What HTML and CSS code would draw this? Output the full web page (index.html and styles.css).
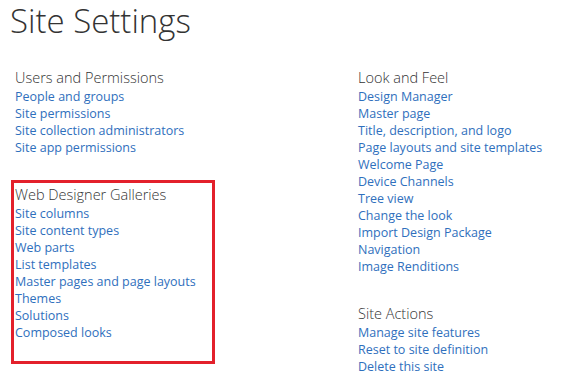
FILE: index.html
```html
<!DOCTYPE html>
<html lang="en">
<head>
  <meta charset="UTF-8">
  <title>Site Settings</title>
  <link rel="stylesheet" href="styles.css">
</head>
<body>
  <div class="page">
    <h1 class="page-title">Site Settings</h1>

    <div class="settings">
      <!-- left column -->
      <div class="column">
        <div class="link-section">
          <h2>Users and Permissions</h2>
          <ul>
            <li><a href="#">People and groups</a></li>
            <li><a href="#">Site permissions</a></li>
            <li><a href="#">Site collection administrators</a></li>
            <li><a href="#">Site app permissions</a></li>
          </ul>
        </div>

        <div class="link-section highlight">
          <h2>Web Designer Galleries</h2>
          <ul>
            <li><a href="#">Site columns</a></li>
            <li><a href="#">Site content types</a></li>
            <li><a href="#">Web parts</a></li>
            <li><a href="#">List templates</a></li>
            <li><a href="#">Master pages and page layouts</a></li>
            <li><a href="#">Themes</a></li>
            <li><a href="#">Solutions</a></li>
            <li><a href="#">Composed looks</a></li>
          </ul>
        </div>
      </div>

      <!-- right column -->
      <div class="column">
        <div class="link-section">
          <h2>Look and Feel</h2>
          <ul>
            <li><a href="#">Design Manager</a></li>
            <li><a href="#">Master page</a></li>
            <li><a href="#">Title, description, and logo</a></li>
            <li><a href="#">Page layouts and site templates</a></li>
            <li><a href="#">Welcome Page</a></li>
            <li><a href="#">Device Channels</a></li>
            <li><a href="#">Tree view</a></li>
            <li><a href="#">Change the look</a></li>
            <li><a href="#">Import Design Package</a></li>
            <li><a href="#">Navigation</a></li>
            <li><a href="#">Image Renditions</a></li>
          </ul>
        </div>

        <div class="link-section">
          <h2>Site Actions</h2>
          <ul>
            <li><a href="#">Manage site features</a></li>
            <li><a href="#">Reset to site definition</a></li>
            <li><a href="#">Delete this site</a></li>
          </ul>
        </div>
      </div>
    </div>
  </div>
</body>
</html>
```

FILE: styles.css
```css
body {
  margin: 0;
  background-color: #fff;
  font-family: 'Open Sans', 'Noto Sans', sans-serif;
  color: #444;
}
.page {
  padding: 0 15px;
}
.page-title {
  margin: 0 0 0 -5px;
  padding-top: 2px;
  font-size: 33px;
  font-weight: 300;
  line-height: 38px;
  color: #333;
}
.settings {
  display: grid;
  grid-template-columns: 343px 1fr;
  margin-top: 27px;
}
.link-section {
  margin-bottom: 28px;
}
.column .link-section:last-child {
  margin-bottom: 0;
}
.link-section h2 {
  margin: 0;
  font-size: 14.5px;
  font-weight: 300;
  line-height: 21px;
  color: #333;
}
.link-section ul {
  list-style: none;
  margin: 0;
  padding: 0;
}
.link-section li {
  font-size: 12.5px;
  line-height: 17px;
}
.link-section a {
  color: #2f6fbd;
  text-decoration: none;
}

/* red frame around the galleries block */
.highlight {
  width: 196px;
  padding-bottom: 19px;
  outline: 3px solid #e3202b;
  outline-offset: 1px;
}
```
